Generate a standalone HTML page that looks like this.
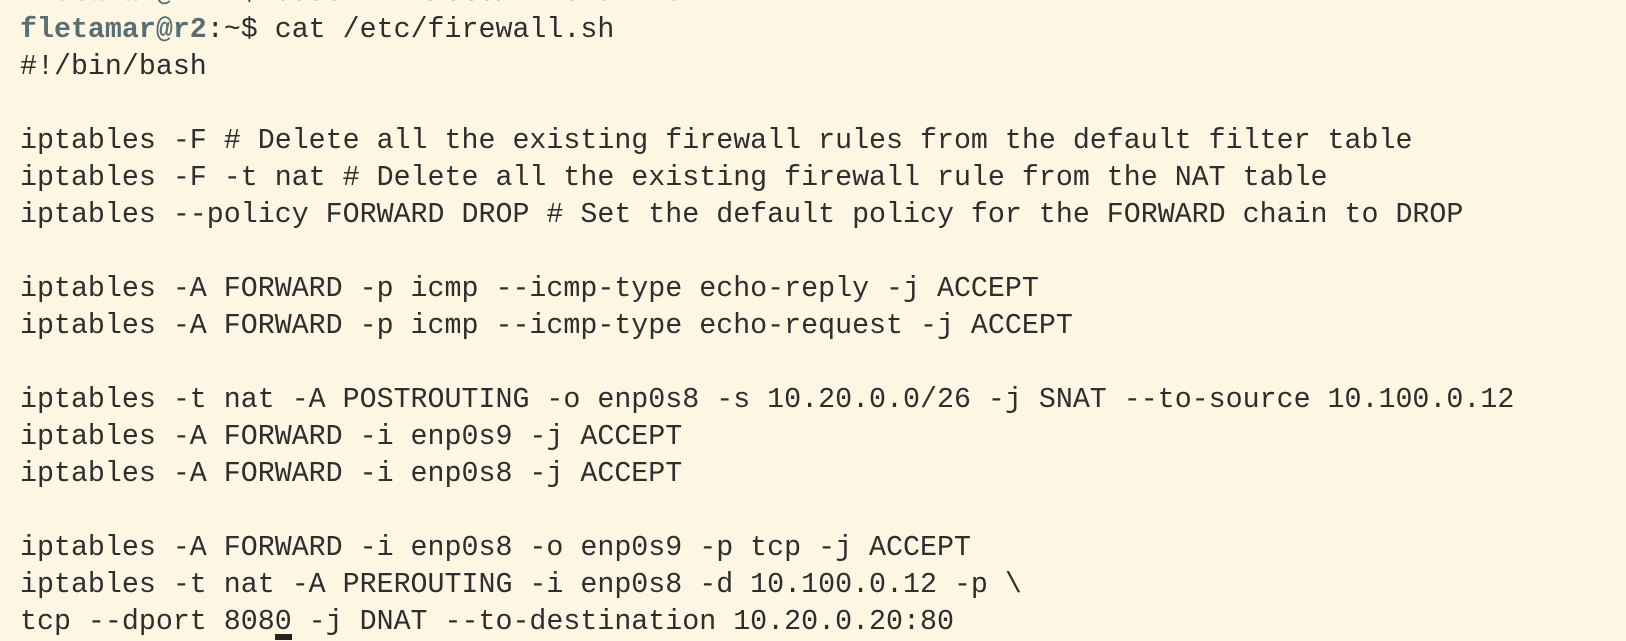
<!DOCTYPE html>
<html><head><meta charset="utf-8"><style>
html,body{margin:0;padding:0;background:#fdf6e3;width:1626px;height:640px;overflow:hidden}
pre{position:absolute;left:20px;top:-25px;margin:0;font-family:"Liberation Mono",monospace;font-size:28.3px;line-height:37px;color:#2e2e2e;white-space:pre}
b{color:#586e75}
.cur{position:absolute;left:275px;top:634px;width:17px;height:6px;background:#222}
</style></head><body>
<pre><b>fletamar@r2</b>:~$ sudo vim /etc/firewall.sh
<b>fletamar@r2</b>:~$ cat /etc/firewall.sh
#!/bin/bash

iptables -F # Delete all the existing firewall rules from the default filter table
iptables -F -t nat # Delete all the existing firewall rule from the NAT table
iptables --policy FORWARD DROP # Set the default policy for the FORWARD chain to DROP

iptables -A FORWARD -p icmp --icmp-type echo-reply -j ACCEPT
iptables -A FORWARD -p icmp --icmp-type echo-request -j ACCEPT

iptables -t nat -A POSTROUTING -o enp0s8 -s 10.20.0.0/26 -j SNAT --to-source 10.100.0.12
iptables -A FORWARD -i enp0s9 -j ACCEPT
iptables -A FORWARD -i enp0s8 -j ACCEPT

iptables -A FORWARD -i enp0s8 -o enp0s9 -p tcp -j ACCEPT
iptables -t nat -A PREROUTING -i enp0s8 -d 10.100.0.12 -p \
tcp --dport 8080 -j DNAT --to-destination 10.20.0.20:80</pre>
<div class="cur"></div>
</body></html>
